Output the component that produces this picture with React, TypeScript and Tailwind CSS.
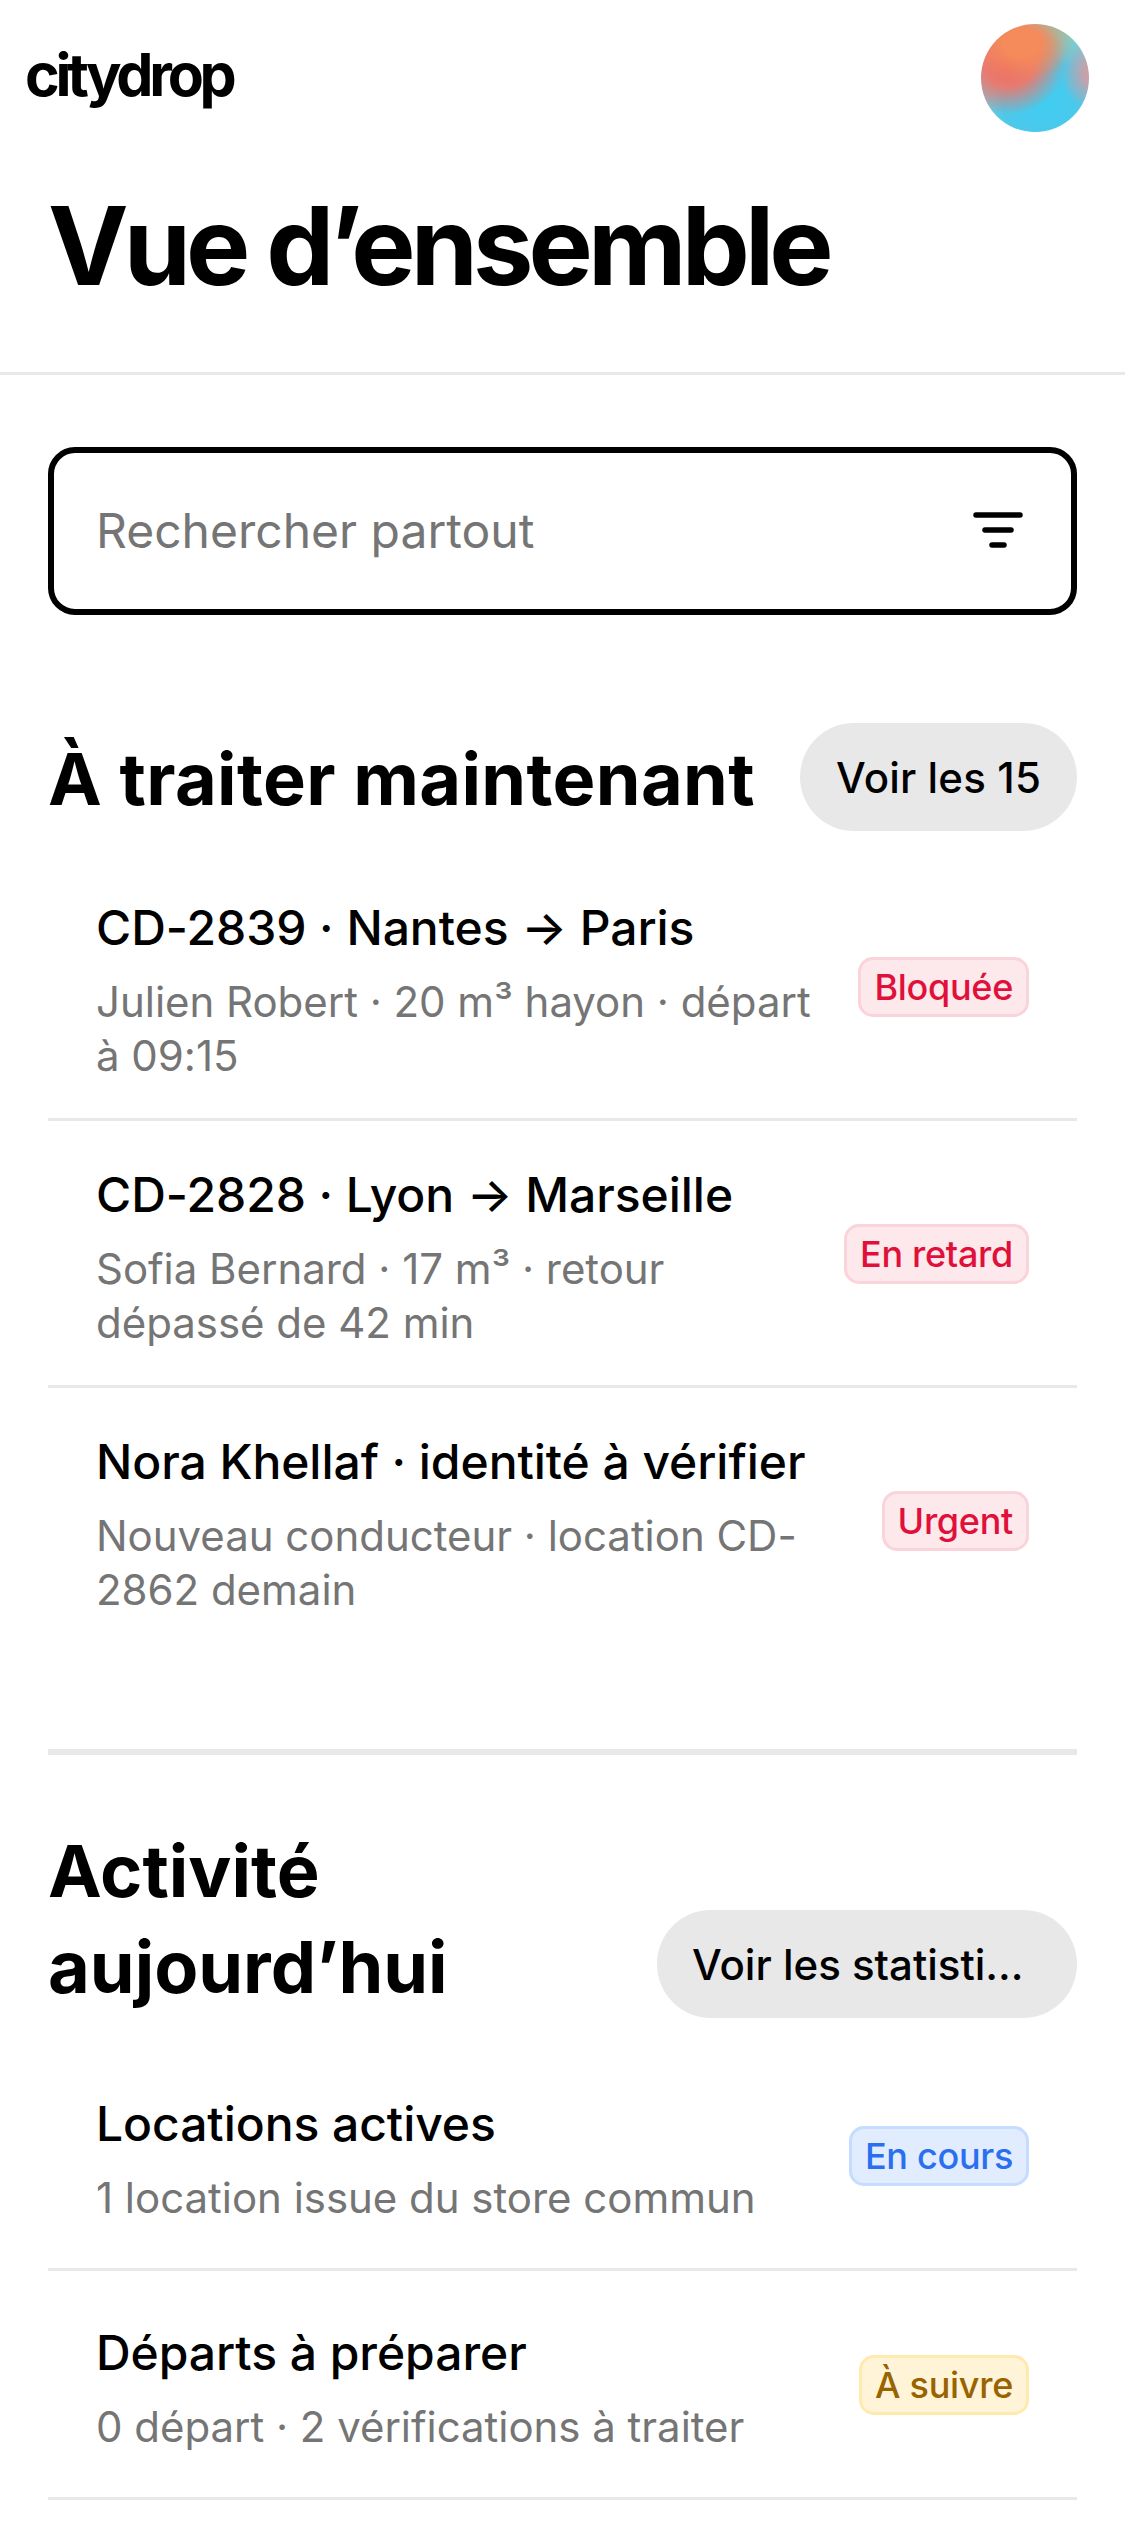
const BADGE = {
  red: "bg-[#fde8ec] border-[#fbd3da] text-[#e0103a]",
  blue: "bg-[#e1ecff] border-[#c5dbff] text-[#2a6ff0]",
  amber: "bg-[#fff4d8] border-[#ffe9ad] text-[#996300]",
};

type Tone = keyof typeof BADGE;

const URGENT = [
  { title: "CD-2839 · Nantes → Paris", sub: "Julien Robert · 20 m³ hayon · départ à 09:15", badge: "Bloquée", tone: "red" as Tone },
  { title: "CD-2828 · Lyon → Marseille", sub: "Sofia Bernard · 17 m³ · retour dépassé de 42 min", badge: "En retard", tone: "red" as Tone },
  { title: "Nora Khellaf · identité à vérifier", sub: "Nouveau conducteur · location CD-2862 demain", badge: "Urgent", tone: "red" as Tone },
];

const TODAY = [
  { title: "Locations actives", sub: "1 location issue du store commun", badge: "En cours", tone: "blue" as Tone },
  { title: "Départs à préparer", sub: "0 départ · 2 vérifications à traiter", badge: "À suivre", tone: "amber" as Tone },
];

function Row({ title, sub, badge, tone, last }: { title: string; sub: string; badge: string; tone: Tone; last?: boolean }) {
  return (
    <div className={`flex min-h-[229px] items-center gap-6 px-12 pt-[36px] pb-[35px] ${last ? "" : "border-b-[3px] border-[#e8e8e8]"}`}>
      <div className="min-w-0 flex-1 pt-[2px]">
        <div className="text-[48px] leading-[72px] font-medium tracking-[-0.05px] text-black">{title}</div>
        <div className="mt-[11px] text-[42px] leading-[54px] tracking-[-0.03px] text-[#757575]">{sub}</div>
      </div>
      <span className={`shrink-0 rounded-[15px] border-[3px] px-[13px] text-[36px] leading-[54px] font-medium tracking-[-0.3px] ${BADGE[tone]}`}>{badge}</span>
    </div>
  );
}

export default function App() {
  return (
    <div className="h-[2532px] w-[1125px] overflow-hidden bg-white font-['Inter',sans-serif] text-black">
      <header className="border-b-[3px] border-[#e8e8e8]">
        <div className="flex items-center justify-between pt-6 pr-9 pl-[25px]">
          <span className="pb-[6px] text-[59px] leading-[102px] font-bold tracking-[-4.2px]">citydrop</span>
          <div className="h-[108px] w-[108px] rounded-full bg-[radial-gradient(ellipse_48%_36%_at_38%_18%,#f58a5a_0%,#f58a5a_35%,transparent_100%),radial-gradient(ellipse_52%_48%_at_26%_36%,#ec6a62_0%,#e87a70_45%,transparent_100%),radial-gradient(ellipse_30%_34%_at_104%_46%,#c9a0a8_0%,#c9a0a8_25%,transparent_100%),radial-gradient(ellipse_36%_34%_at_66%_6%,#7fcfc0_0%,transparent_100%),radial-gradient(ellipse_30%_40%_at_0%_45%,#a9a8c0_0%,transparent_100%),radial-gradient(circle_at_58%_70%,#3fcdf2_0%,#4cc8ea_42%,#8fcfd0_78%)]" />
        </div>
        <h1 className="mt-[39px] pb-[51px] pl-12 text-[108px] leading-[150px] font-bold tracking-[-4.9px]">Vue d’ensemble</h1>
      </header>

      <main className="px-12 pt-[72px]">
        <div className="flex h-[168px] items-center justify-between rounded-[27px] border-[6px] border-black pr-[48px] pl-[42px]">
          <span className="text-[48px] text-[#757575]">Rechercher partout</span>
          <svg width="54" height="54" viewBox="0 0 54 54" fill="none" stroke="black" strokeWidth="5.5" strokeLinecap="round">
            <path d="M7 11h44M16 26h26M23 41h12" />
          </svg>
        </div>

        <section className="mt-[108px] border-b-[6px] border-[#e8e8e8] pb-[97px]">
          <div className="flex items-center justify-between gap-6">
            <h2 className="pt-1 text-[72px] leading-[96px] font-bold tracking-[0.35px]">À traiter maintenant</h2>
            <button className="h-[108px] shrink-0 rounded-full bg-[#e8e8e8] px-[36px] text-[42px] font-medium tracking-[0.15px]">Voir les 15</button>
          </div>
          <div className="mt-[23px]">
            {URGENT.map((r, i) => (
              <Row key={r.title} {...r} last={i === URGENT.length - 1} />
            ))}
          </div>
        </section>

        <section className="mt-[65px]">
          <div className="flex items-center justify-between gap-6">
            <h2 className="min-w-0 flex-1 text-[72px] leading-[96px] font-bold">Activité aujourd’hui</h2>
            <button className="mt-[90px] h-[108px] w-[420px] shrink-0 truncate rounded-full bg-[#e8e8e8] pr-[40px] pl-[35px] text-left text-[42px] font-medium">Voir les statistiques</button>
          </div>
          <div className="mt-[24px]">
            {TODAY.map((r) => (
              <Row key={r.title} {...r} />
            ))}
          </div>
        </section>
      </main>
    </div>
  );
}
